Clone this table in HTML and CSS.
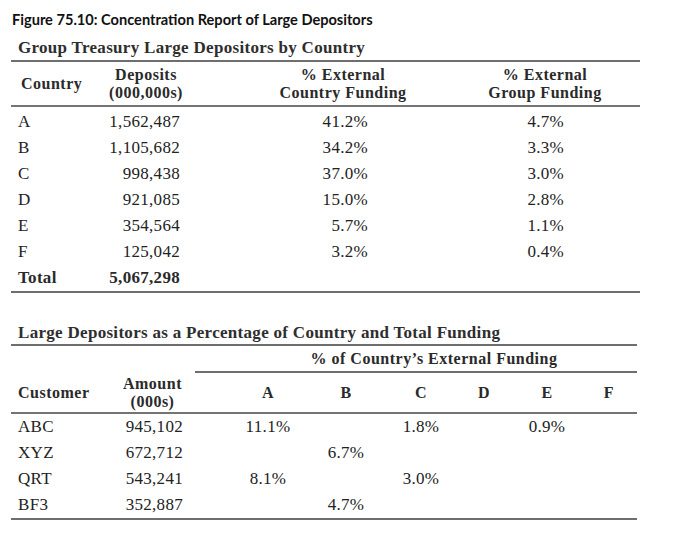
FILE: index.html
```html
<!DOCTYPE html>
<html lang="en">
<head>
<meta charset="utf-8">
<title>Figure 75.10</title>
<link rel="stylesheet" href="styles.css">
</head>
<body>
<div class="page">
  <h1 class="fig-title">Figure 75.10: Concentration Report of Large Depositors</h1>

  <h2 class="sec-title">Group Treasury Large Depositors by Country</h2>
  <div class="t1">
    <div class="g1 head">
      <div class="hc left">Country</div>
      <div class="hc">Deposits<br>(000,000s)</div>
      <div class="hc">% External<br>Country Funding</div>
      <div class="hc">% External<br>Group Funding</div>
      <div></div>
    </div>
    <div class="g1 body">
      <div class="lab">A</div><div class="num c2">1,562,487</div><div class="num c3">41.2%</div><div class="num c4">4.7%</div><div></div>
      <div class="lab">B</div><div class="num c2">1,105,682</div><div class="num c3">34.2%</div><div class="num c4">3.3%</div><div></div>
      <div class="lab">C</div><div class="num c2">998,438</div><div class="num c3">37.0%</div><div class="num c4">3.0%</div><div></div>
      <div class="lab">D</div><div class="num c2">921,085</div><div class="num c3">15.0%</div><div class="num c4">2.8%</div><div></div>
      <div class="lab">E</div><div class="num c2">354,564</div><div class="num c3">5.7%</div><div class="num c4">1.1%</div><div></div>
      <div class="lab">F</div><div class="num c2">125,042</div><div class="num c3">3.2%</div><div class="num c4">0.4%</div><div></div>
      <div class="lab bold">Total</div><div class="num c2 bold">5,067,298</div><div></div><div></div><div></div>
    </div>
  </div>

  <h2 class="sec-title second">Large Depositors as a Percentage of Country and Total Funding</h2>
  <div class="t2">
    <div class="g2 span-row">
      <div class="span-cell">% of Country’s External Funding</div>
    </div>
    <div class="g2 head head2">
      <div class="hc left">Customer</div>
      <div class="hc amt">Amount<br>(000s)</div>
      <div></div>
      <div class="hc">A</div>
      <div class="hc">B</div>
      <div class="hc">C</div>
      <div class="hc">D</div>
      <div class="hc">E</div>
      <div class="hc">F</div>
    </div>
    <div class="g2 body">
      <div class="lab">ABC</div><div class="num amt-v">945,102</div><div></div><div class="pc">11.1%</div><div class="pc"></div><div class="pc">1.8%</div><div class="pc"></div><div class="pc">0.9%</div><div class="pc"></div>
      <div class="lab">XYZ</div><div class="num amt-v">672,712</div><div></div><div class="pc"></div><div class="pc">6.7%</div><div class="pc"></div><div class="pc"></div><div class="pc"></div><div class="pc"></div>
      <div class="lab">QRT</div><div class="num amt-v">543,241</div><div></div><div class="pc">8.1%</div><div class="pc"></div><div class="pc">3.0%</div><div class="pc"></div><div class="pc"></div><div class="pc"></div>
      <div class="lab">BF3</div><div class="num amt-v">352,887</div><div></div><div class="pc"></div><div class="pc">4.7%</div><div class="pc"></div><div class="pc"></div><div class="pc"></div><div class="pc"></div>
    </div>
  </div>
</div>
</body>
</html>
```
FILE: styles.css
```css
html, body {
  margin: 0;
  padding: 0;
  background: #ffffff;
}

.page {
  padding: 11px 0 0 0;
  width: 678px;
  color: #222222;
  font-family: "Liberation Serif", "Times New Roman", serif;
}

.fig-title {
  margin: 0 0 0 12px;
  font-family: Lato, "Liberation Sans", sans-serif;
  font-weight: 700;
  font-size: 14.6px;
  line-height: 18px;
  color: #111111;
}

.sec-title {
  margin: 9px 0 0 18px;
  padding-bottom: 2px;
  font-size: 17px;
  line-height: 20px;
  font-weight: 700;
  color: #2e2e2e;
  letter-spacing: 0.3px;
  white-space: nowrap;
}

.sec-title.second {
  margin-top: 30px;
  padding-bottom: 1px;
}

.t1 {
  margin-left: 11px;
  width: 629px;
  border-top: 2px solid #6e6e6e;
  border-bottom: 2px solid #6e6e6e;
}

.t2 {
  margin-left: 11px;
  width: 626px;
  border-top: 2px solid #6e6e6e;
  border-bottom: 2px solid #6e6e6e;
}

.g1 {
  display: grid;
  grid-template-columns: 86px 98px 296px 108px 41px;
}

.g2 {
  display: grid;
  grid-template-columns: 94px 90px 36px 74px 82px 68px 58px 68px 56px;
}

.head {
  height: 43px;
  border-bottom: 2px solid #747474;
}

.head2 {
  box-sizing: border-box;
  padding-top: 2px;
}

.hc {
  display: flex;
  align-items: center;
  justify-content: center;
  text-align: center;
  white-space: nowrap;
  font-weight: 700;
  font-size: 16px;
  line-height: 18px;
  letter-spacing: 0.5px;
  color: #2a2a2a;
}

.hc.left {
  justify-content: flex-start;
  text-align: left;
  padding-left: 10px;
}

.t2 .hc.left {
  padding-left: 7px;
}

.hc.amt {
  padding-left: 5px;
}

.body {
  grid-auto-rows: 26px;
  padding-top: 2px;
  font-size: 17px;
  line-height: 26px;
  letter-spacing: 0.3px;
  white-space: nowrap;
}

.t2 .body {
  padding-top: 0;
}

.lab {
  padding-left: 7px;
}

.num {
  text-align: right;
}

.c2 {
  padding-right: 15px;
}

.c3 {
  padding-right: 123px;
}

.c4 {
  padding-right: 35px;
}

.amt-v {
  padding-right: 12px;
}

.pc {
  text-align: center;
}

.bold {
  font-weight: 700;
  color: #2a2a2a;
}

.span-row {
  height: 25px;
}

.span-cell {
  grid-column: 3 / 10;
  padding-left: 36px;
  text-align: center;
  white-space: nowrap;
  font-weight: 700;
  font-size: 16px;
  line-height: 25px;
  letter-spacing: 0.5px;
  color: #2a2a2a;
  border-bottom: 2px solid #6e6e6e;
}
```
